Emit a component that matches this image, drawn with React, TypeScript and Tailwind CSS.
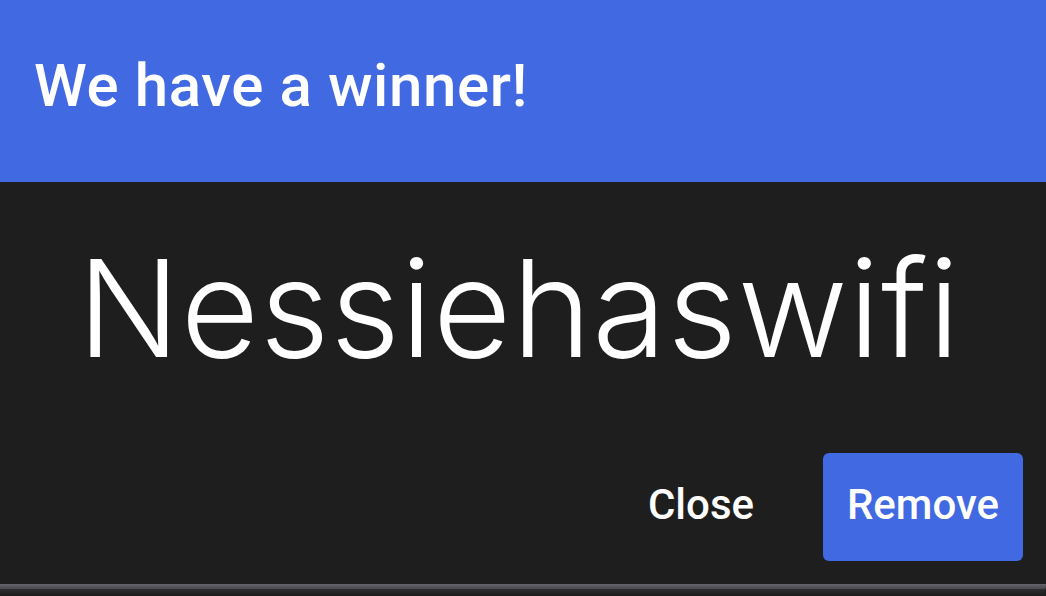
export default function App() {
  return (
    <div className="w-[1046px] h-[596px] overflow-hidden flex flex-col bg-[#1e1e1e]">
      {/* Dialog title bar */}
      <div className="h-[182px] shrink-0 bg-[#4169e1] pl-[34px] pt-[56px]">
        <h1 className="text-[60px] leading-none font-medium text-white font-['Roboto',sans-serif] tracking-[0.6px]">
          We have a winner!
        </h1>
      </div>

      {/* Dialog body */}
      <div className="flex-1 flex flex-col bg-[#1e1e1e]">
        <div className="mt-[59px] h-[135px] flex justify-center pr-[8px]">
          <span className="text-[135px] leading-none font-light text-white font-['Inter',sans-serif] tracking-[0.8px]">
            Nessiehaswifi
          </span>
        </div>

        <div className="mt-[77px] flex justify-end items-start gap-[44px] pr-[23px]">
          <button className="h-[108px] px-[25px] pt-[31px] pb-[35px] rounded-[6px] text-[42px] leading-none font-medium text-white font-['Roboto',sans-serif]">
            Close
          </button>
          <button className="h-[108px] w-[200px] pt-[31px] pb-[35px] rounded-[6px] bg-[#4169e1] text-[42px] leading-none font-medium text-white font-['Roboto',sans-serif]">
            Remove
          </button>
        </div>
      </div>

      {/* Window frame edge below the dialog */}
      <div className="h-[12px] shrink-0 flex flex-col rounded-br-[10px] overflow-hidden">
        <div className="h-[5px] bg-gradient-to-b from-[#66646b] to-[#4a484e]" />
        <div className="flex-1 bg-gradient-to-b from-[#2e2d30] to-[#1c1c1d]" />
      </div>
    </div>
  );
}
